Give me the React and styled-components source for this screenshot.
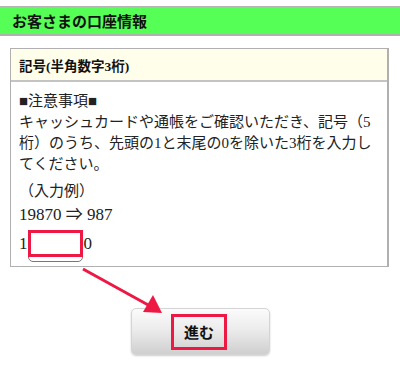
import React from "react";
import styled, { createGlobalStyle } from "styled-components";

const GlobalStyle = createGlobalStyle`
	html, body {
		margin: 0;
		padding: 0;
		background: #fff;
	}
	body {
		font-family: "Liberation Serif", "Noto Sans CJK JP", serif;
		color: #222;
	}
`;

const Page = styled.div`
	position: relative;
	width: 400px;
	height: 381px;
	padding-top: 6px;
	box-sizing: border-box;
	overflow: hidden;
`;

const TitleBar = styled.div`
	display: flex;
	align-items: center;
	height: 27px;
	padding-left: 12px;
	background: #55ff55;
	border-top: 1px solid #b4b4b4;
	border-bottom: 2px solid #b0b0b0;
	font-size: 15px;
	font-weight: bold;
	color: #111;
`;

const Panel = styled.div`
	margin: 12px 11px 0 10px;
	border: 1px solid #b0b0b0;
	border-right-width: 2px;
`;

const PanelHead = styled.div`
	display: flex;
	align-items: center;
	height: 31px;
	padding-left: 8px;
	background: #fffeea;
	border-bottom: 2px solid #c4c4c4;
	font-size: 13.5px;
	font-weight: bold;
	color: #111;
`;

const PanelBody = styled.div`
	padding: 9px 8px 4px 8px;
	font-size: 15px;
	line-height: 21px;
	color: #222;
`;

const Line = styled.div`
	margin-top: ${(p) => p.gap || 0}px;
	white-space: nowrap;
`;

const Num = styled.span`
	font-size: 17px;
`;

const InputRow = styled.div`
	display: flex;
	align-items: flex-start;
	margin-top: 4px;
	line-height: 27px;
`;

const InputWrap = styled.div`
	position: relative;
	width: 55px;
	height: 32px;
	margin: 0 1px 0 0;
`;

const Field = styled.div`
	width: 100%;
	height: 100%;
	box-sizing: border-box;
	border: 1px solid #777;
	border-radius: 5px;
	background: #fff;
`;

const Mark = styled.div`
	position: absolute;
	left: 0;
	top: 0;
	width: 55px;
	height: 27px;
	box-sizing: border-box;
	border: 3px solid #ee1845;
	background: #fff;
`;

const Actions = styled.div`
	display: flex;
	justify-content: center;
	margin-top: 41px;
	padding-left: 1px;
`;

const NextButton = styled.button`
	display: flex;
	align-items: center;
	justify-content: center;
	width: 139px;
	height: 47px;
	padding: 0 3px 0 0;
	border: 1px solid #d4d4d4;
	border-radius: 5px;
	background: linear-gradient(#fbfbfb, #ececec 45%, #cfcfcf);
	box-shadow: 0 1px 2px rgba(0, 0, 0, 0.2);
	cursor: pointer;
`;

const ButtonLabel = styled.span`
	display: flex;
	align-items: center;
	justify-content: center;
	width: 56px;
	height: 36px;
	box-sizing: border-box;
	border: 3px solid #ee1845;
	font-family: "Noto Sans CJK JP", "Noto Sans", sans-serif;
	font-size: 15px;
	font-weight: bold;
	color: #111;
`;

const Arrow = styled.svg`
	position: absolute;
	left: 0;
	top: 0;
	pointer-events: none;
`;

export default function App() {
	return (
		<Page>
			<GlobalStyle />
			<TitleBar>お客さまの口座情報</TitleBar>
			<Panel>
				<PanelHead>記号(半角数字3桁)</PanelHead>
				<PanelBody>
					<Line>■注意事項■</Line>
					<Line>キャッシュカードや通帳をご確認いただき、記号（5</Line>
					<Line>桁）のうち、先頭の1と末尾の0を除いた3桁を入力し</Line>
					<Line>てください。</Line>
					<Line gap={6}>（入力例）</Line>
					<Line gap={2}>
						<Num>19870 ⇒ 987</Num>
					</Line>
					<InputRow>
						<Num>1</Num>
						<InputWrap>
							<Field />
							<Mark />
						</InputWrap>
						<Num>0</Num>
					</InputRow>
				</PanelBody>
			</Panel>
			<Actions>
				<NextButton>
					<ButtonLabel>進む</ButtonLabel>
				</NextButton>
			</Actions>
			<Arrow width="400" height="381" viewBox="0 0 400 381">
				<line x1="83" y1="269" x2="150" y2="306" stroke="#ee1845" strokeWidth="3" />
				<polygon points="162,313 143,312 153,295" fill="#ee1845" />
			</Arrow>
		</Page>
	);
}
